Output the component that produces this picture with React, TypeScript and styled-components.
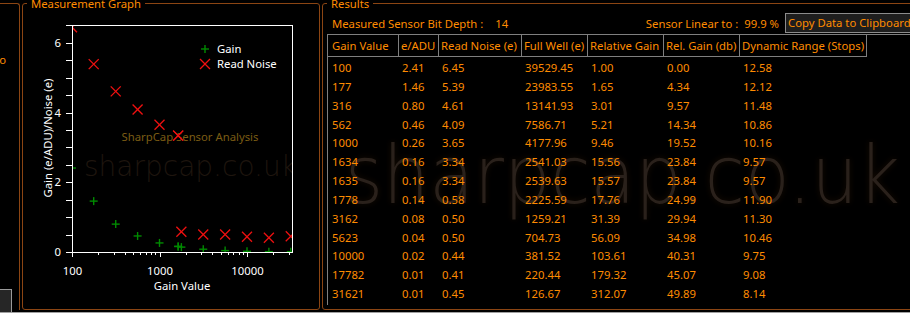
import React from "react";
import styled, { createGlobalStyle } from "styled-components";

const ORANGE = "#ff8c00";
const BROWN = "#8b4513";
const GRID = "#7f7f7f";
const UI_FONT = `"Noto Sans", "Open Sans", "DejaVu Sans", sans-serif`;
const MARK_FONT = `"DejaVu Sans", sans-serif`;

const GlobalStyle = createGlobalStyle`
  html, body {
    margin: 0;
    background: #000;
    overflow: hidden;
  }
  body {
    font-family: ${UI_FONT};
    font-size: 11.3px;
    color: ${ORANGE};
  }
`;

// gain, e/ADU, read noise, full well, relative gain, rel gain db, dynamic range
const ROWS: string[][] = [
  ["100", "2.41", "6.45", "39529.45", "1.00", "0.00", "12.58"],
  ["177", "1.46", "5.39", "23983.55", "1.65", "4.34", "12.12"],
  ["316", "0.80", "4.61", "13141.93", "3.01", "9.57", "11.48"],
  ["562", "0.46", "4.09", "7586.71", "5.21", "14.34", "10.86"],
  ["1000", "0.26", "3.65", "4177.96", "9.46", "19.52", "10.16"],
  ["1634", "0.16", "3.34", "2541.03", "15.56", "23.84", "9.57"],
  ["1635", "0.16", "3.34", "2539.63", "15.57", "23.84", "9.57"],
  ["1778", "0.14", "0.58", "2225.59", "17.76", "24.99", "11.90"],
  ["3162", "0.08", "0.50", "1259.21", "31.39", "29.94", "11.30"],
  ["5623", "0.04", "0.50", "704.73", "56.09", "34.98", "10.46"],
  ["10000", "0.02", "0.44", "381.52", "103.61", "40.31", "9.75"],
  ["17782", "0.01", "0.41", "220.44", "179.32", "45.07", "9.08"],
  ["31621", "0.01", "0.45", "126.67", "312.07", "49.89", "8.14"],
];

const HEADERS = [
  "Gain Value",
  "e/ADU",
  "Read Noise (e)",
  "Full Well (e)",
  "Relative Gain",
  "Rel. Gain (db)",
  "Dynamic Range (Stops)",
];

const COLS = [71, 40, 83, 66, 76, 76, 127].map((w) => `${w}px`).join(" ");

// plot area, in page pixels
const P = { left: 72, top: 25, right: 292, bottom: 252 };
const xOf = (g: number) => P.left + (Math.log10(g) - 2) * 87.5;
const yOf = (v: number) => P.bottom - v * 34.85;

function Plus({ x, y }: { x: number; y: number }) {
  return (
    <g stroke="#008a00" strokeWidth={1.4}>
      <line x1={x - 4} y1={y} x2={x + 4} y2={y} />
      <line x1={x} y1={y - 4} x2={x} y2={y + 4} />
    </g>
  );
}

function Cross({ x, y }: { x: number; y: number }) {
  return (
    <g stroke="#f01010" strokeWidth={1.3}>
      <line x1={x - 5} y1={y - 5} x2={x + 5} y2={y + 5} />
      <line x1={x - 5} y1={y + 5} x2={x + 5} y2={y - 5} />
    </g>
  );
}

function GainChart() {
  const yTicks = Array.from({ length: 14 }, (_, i) => i * 0.5);
  const xMinor = [2, 3, 4, 5, 6, 7, 8, 9]
    .flatMap((m) => [m * 100, m * 1000, m * 10000])
    .filter((v) => v < 34000);
  const points = ROWS.map((r) => ({ g: +r[0], e: +r[1], n: +r[2] }));

  return (
    <ChartSvg width={296} height={298} viewBox="23 11 296 298">
      <defs>
        <clipPath id="plotClip">
          <rect x={P.left} y={P.top} width={P.right - P.left + 1} height={P.bottom - P.top + 1} />
        </clipPath>
      </defs>

      <g clipPath="url(#plotClip)">
        <text x={84} y={176} fontFamily={MARK_FONT} fontWeight={200} fontSize={28} fill="#1e150e">
          sharpcap.co.uk
        </text>
        <text x={190} y={141} textAnchor="middle" fontSize={11.3} fill="#7b5c14">
          SharpCap Sensor Analysis
        </text>
        {points.map((p) => (
          <Plus key={"g" + p.g} x={xOf(p.g)} y={yOf(p.e)} />
        ))}
        {points.map((p) => (
          <Cross key={"n" + p.g} x={xOf(p.g)} y={yOf(p.n)} />
        ))}
      </g>

      <g stroke="#fff" strokeWidth={1} shapeRendering="crispEdges" fill="none">
        <rect x={P.left + 0.5} y={P.top + 0.5} width={P.right - P.left} height={P.bottom - P.top} />
        {yTicks.map((v) => (
          <line key={v} x1={66} x2={P.left} y1={Math.round(yOf(v)) + 0.5} y2={Math.round(yOf(v)) + 0.5} />
        ))}
        {[100, 1000, 10000].map((g) => (
          <line key={g} x1={Math.round(xOf(g)) + 0.5} x2={Math.round(xOf(g)) + 0.5} y1={P.bottom} y2={P.bottom + 5} />
        ))}
        {xMinor.map((g) => (
          <line key={g} x1={Math.round(xOf(g)) + 0.5} x2={Math.round(xOf(g)) + 0.5} y1={P.bottom} y2={P.bottom + 3} />
        ))}
      </g>

      <g fill="#fff" fontSize={11.3}>
        {[0, 2, 4, 6].map((v) => (
          <text key={v} x={61} y={yOf(v) + 4} textAnchor="end">
            {v}
          </text>
        ))}
        {[100, 1000, 10000].map((g) => (
          <text key={g} x={xOf(g) + 0.5} y={275} textAnchor="middle">
            {g}
          </text>
        ))}
        <text x={182} y={290} textAnchor="middle">
          Gain Value
        </text>
        <text x={47} y={138} textAnchor="middle" dominantBaseline="central" transform="rotate(-90 47 138)">
          Gain (e/ADU)/Noise (e)
        </text>
        <Plus x={205} y={49} />
        <text x={217} y={53}>Gain</text>
        <Cross x={205} y={64} />
        <text x={217} y={68}>Read Noise</text>
      </g>
    </ChartSvg>
  );
}

export default function App() {
  return (
    <Screen>
      <GlobalStyle />
      <Panels>
        <SidePanel>
          <ClippedLabel>Auto</ClippedLabel>
          <EdgeButton />
        </SidePanel>

        <GroupBox $width={298}>
          <Caption>Measurement Graph</Caption>
          <GainChart />
        </GroupBox>

        <GroupBox>
          <Caption>Results</Caption>
          <InfoBar>
            <InfoPair>
              Measured Sensor Bit Depth :<InfoValue $gap={12}>14</InfoValue>
            </InfoPair>
            <InfoPair>
              Sensor Linear to :<InfoValue $gap={6}>99.9 %</InfoValue>
              <CopyButton type="button">Copy Data to Clipboard</CopyButton>
            </InfoPair>
          </InfoBar>

          <ListView>
            <Watermark>sharpcap.co.uk</Watermark>
            <HeaderRow>
              {HEADERS.map((h) => (
                <HeaderCell key={h}>{h}</HeaderCell>
              ))}
            </HeaderRow>
            {ROWS.map((r) => (
              <DataRow key={r[0]}>
                {r.map((c, i) => (
                  <DataCell key={i}>{c}</DataCell>
                ))}
              </DataRow>
            ))}
          </ListView>
        </GroupBox>
      </Panels>
      <BottomRule />
    </Screen>
  );
}

const Screen = styled.div`
  width: 910px;
  height: 313px;
  overflow: hidden;
  background: #000;
  display: flex;
  flex-direction: column;
`;

const Panels = styled.div`
  display: flex;
  gap: 2px;
  height: 314px;
  margin: -4px -10px 0 -10px;
  flex: none;
`;

const SidePanel = styled.div`
  width: 30px;
  flex: none;
  margin-top: 7px;
  box-sizing: border-box;
  border-top: 1px solid ${BROWN};
  border-right: 1px solid ${BROWN};
  border-top-right-radius: 3px;
  display: flex;
  flex-direction: column;
`;

const ClippedLabel = styled.div`
  display: flex;
  justify-content: flex-end;
  white-space: nowrap;
  line-height: 15px;
  margin-top: 48px;
  padding-right: 13px;
`;

const EdgeButton = styled.div`
  margin-top: auto;
  margin-bottom: -3px;
  margin-right: 7px;
  align-self: flex-end;
  width: 30px;
  height: 24px;
  box-sizing: border-box;
  border: 1px solid #9a9a9a;
  background: #262626;
`;

const GroupBox = styled.fieldset<{ $width?: number }>`
  margin: 0;
  padding: 0;
  min-width: 0;
  box-sizing: border-box;
  border: 1px solid ${BROWN};
  border-radius: 3px;
  ${(p) => (p.$width ? `width: ${p.$width}px; flex: none;` : "flex: 1;")}
`;

const Caption = styled.legend`
  margin-left: 4px;
  padding: 0 4px;
  line-height: 15px;
  color: ${ORANGE};
`;

const ChartSvg = styled.svg`
  display: block;
  font-family: ${UI_FONT};
`;

const InfoBar = styled.div`
  height: 23px;
  display: flex;
  align-items: center;
  justify-content: space-between;
  padding: 1px 0 0 9px;
  box-sizing: border-box;
  white-space: nowrap;
`;

const InfoPair = styled.div`
  display: flex;
  align-items: center;
`;

const InfoValue = styled.span<{ $gap: number }>`
  margin-left: ${(p) => p.$gap}px;
`;

const CopyButton = styled.button`
  margin-left: 6px;
  width: 134px;
  height: 20px;
  box-sizing: border-box;
  padding: 0 0 0 2px;
  border: 1px solid #8c8c8c;
  border-radius: 0;
  background: #1e1e1e;
  color: ${ORANGE};
  font: inherit;
  line-height: 18px;
  text-align: left;
  white-space: nowrap;
  overflow: hidden;
`;

const ListView = styled.div`
  position: relative;
  z-index: 0;
  margin-left: 4px;
  height: 271px;
  box-sizing: border-box;
  border-left: 1px solid ${GRID};
  border-top: 1px solid ${GRID};
  overflow: hidden;
`;

const Watermark = styled.div`
  position: absolute;
  z-index: -1;
  left: 17px;
  top: 100px;
  font-family: ${MARK_FONT};
  font-weight: 200;
  font-size: 73px;
  line-height: 73px;
  white-space: nowrap;
  color: #2a211b;
  text-shadow: 0 0 6px rgba(255, 140, 40, 0.1);
  transform: scaleY(1.1);
  transform-origin: left top;
  pointer-events: none;
`;

const HeaderRow = styled.div`
  display: grid;
  grid-template-columns: ${COLS};
`;

const HeaderCell = styled.div`
  height: 22px;
  box-sizing: border-box;
  border-right: 1px solid ${GRID};
  border-bottom: 1px solid ${GRID};
  padding: 1px 0 0 2px;
  line-height: 20px;
  white-space: nowrap;
  overflow: hidden;

  &:first-child {
    padding-left: 4px;
  }
`;

const DataRow = styled.div`
  display: grid;
  grid-template-columns: ${COLS};
  height: 18.85px;
`;

const DataCell = styled.div`
  padding: 2px 0 0 3px;
  line-height: 18.85px;
  white-space: nowrap;
  overflow: hidden;

  &:first-child {
    padding-left: 4px;
  }
`;

const BottomRule = styled.div`
  flex: none;
  margin-top: 2px;
  border-top: 1px solid #a0a0a0;
`;
